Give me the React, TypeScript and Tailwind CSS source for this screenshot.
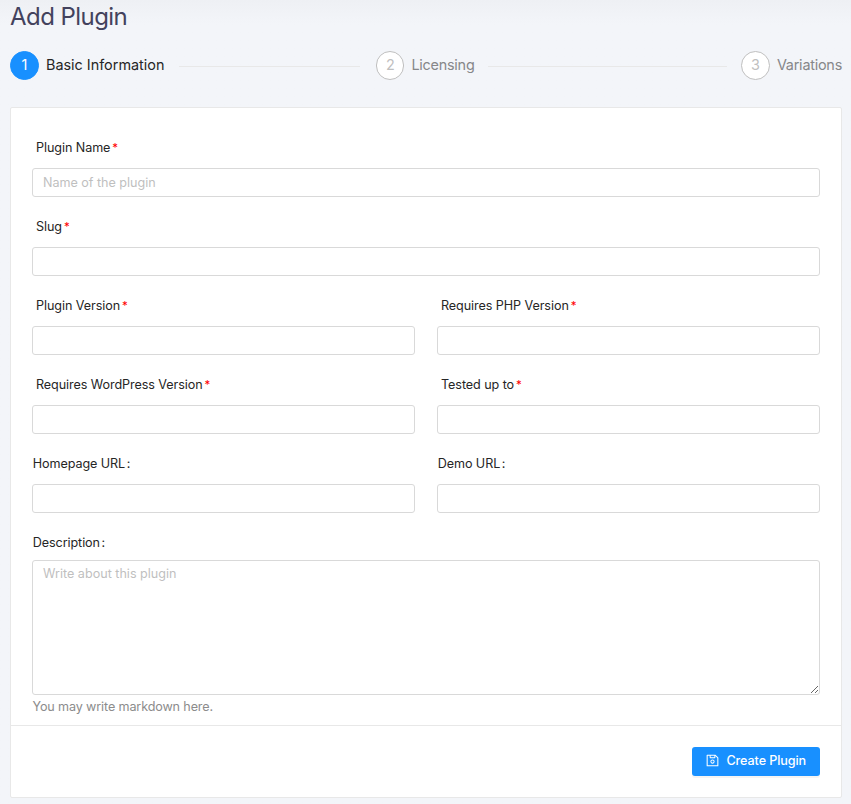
import React from "react";
import { AiOutlineSave } from "react-icons/ai";

type FieldProps = { label: string; required?: boolean; placeholder?: string };

function Label({ label, required }: { label: string; required?: boolean }) {
  return (
    <div
      className={`flex h-9 items-center pt-0.5 tracking-[-0.08px] ${required ? "pl-1" : "pl-[0.7px]"}`}
    >
      <span className="whitespace-nowrap">{label}</span>
      {required ? (
        <span className="ml-0.5 text-[11.5px] text-[#ff0000]">*</span>
      ) : (
        <span className="ml-[1.5px]">:</span>
      )}
    </div>
  );
}

function Field({ label, required, placeholder }: FieldProps) {
  return (
    <label className="block pb-[11px]">
      <Label label={label} required={required} />
      <input
        type="text"
        placeholder={placeholder}
        className="mt-[3px] block h-[29px] w-full rounded-[3px] border border-[#d9d9d9] bg-white px-2.5 tracking-[-0.03px] placeholder:text-[#bfbfbf] outline-none"
      />
    </label>
  );
}

function Step({ index, title, active }: { index: number; title: string; active?: boolean }) {
  return (
    <div className="flex items-center">
      <span
        className={`flex h-[29px] items-center justify-center rounded-full border pb-0.5 text-[14.4px] ${
          index === 2 ? "w-7" : "w-[29px]"
        } ${
          active ? "border-[#1890ff] bg-[#1890ff] text-white" : "border-[#bfbfbf] bg-white text-[#bfbfbf]"
        }`}
      >
        {index}
      </span>
      <span
        className={`ml-[7px] whitespace-nowrap pb-0.5 text-[14.4px] ${
          active ? "text-[#262626]" : "tracking-[-0.23px] text-[#868789]"
        }`}
      >
        {title}
      </span>
    </div>
  );
}

export default function App() {
  return (
    <div className="h-[804px] w-[851px] overflow-hidden bg-[#f3f5f9] bg-linear-to-b from-[#eef0f4] to-[#f3f5f9] to-[24px] pr-[9px] pl-2.5 font-['Inter',sans-serif] text-[12.6px] leading-5 text-[#262626]">
      <h1 className="h-[33px] text-[24px] leading-[33px] tracking-[-0.55px] text-[#43425d]">Add Plugin</h1>
      <div className="mt-[18px] flex h-[29px] items-center">
        <Step index={1} title="Basic Information" active />
        <div className="mr-4 ml-[15px] h-px w-[181px] translate-y-px bg-[#e8e8e8]" />
        <Step index={2} title="Licensing" />
        <div className="mr-3.5 ml-3.5 h-px flex-1 translate-y-px bg-[#e8e8e8]" />
        <Step index={3} title="Variations" />
      </div>
      <form className="mt-[27px] h-[691px] rounded-[2px] border border-[#e8e8e8] bg-white">
        <div className="h-[617px] px-[21px] pt-[21px]">
          <Field label="Plugin Name" required placeholder="Name of the plugin" />
          <Field label="Slug" required />
          <div className="grid grid-cols-2 gap-x-[22px]">
            <Field label="Plugin Version" required />
            <Field label="Requires PHP Version" required />
            <Field label="Requires WordPress Version" required />
            <Field label="Tested up to" required />
            <Field label="Homepage URL" />
            <Field label="Demo URL" />
          </div>
          <Label label="Description" />
          <textarea
            placeholder="Write about this plugin"
            className="block h-[135px] w-full resize-y rounded-[3px] border border-[#d9d9d9] bg-white px-2.5 py-[3px] placeholder:text-[#bfbfbf] outline-none"
          />
          <p className="mt-0.5 pl-[0.5px] tracking-[-0.13px] text-[#8c8c8c]">You may write markdown here.</p>
        </div>
        <div className="flex justify-end border-t border-[#e8e8e8] px-[21px] pt-[21px]">
          <button
            type="button"
            className="flex h-[29px] w-32 items-center justify-end rounded-[3px] bg-[#1890ff] pr-3.5 font-medium text-white shadow-[0_2px_0_rgba(0,0,0,0.045)]"
          >
            <AiOutlineSave className="mr-1.5 mb-0.5 h-[15px] w-[15px]" />
            <span className="whitespace-nowrap pb-0.5 tracking-[-0.1px]">Create Plugin</span>
          </button>
        </div>
      </form>
    </div>
  );
}
